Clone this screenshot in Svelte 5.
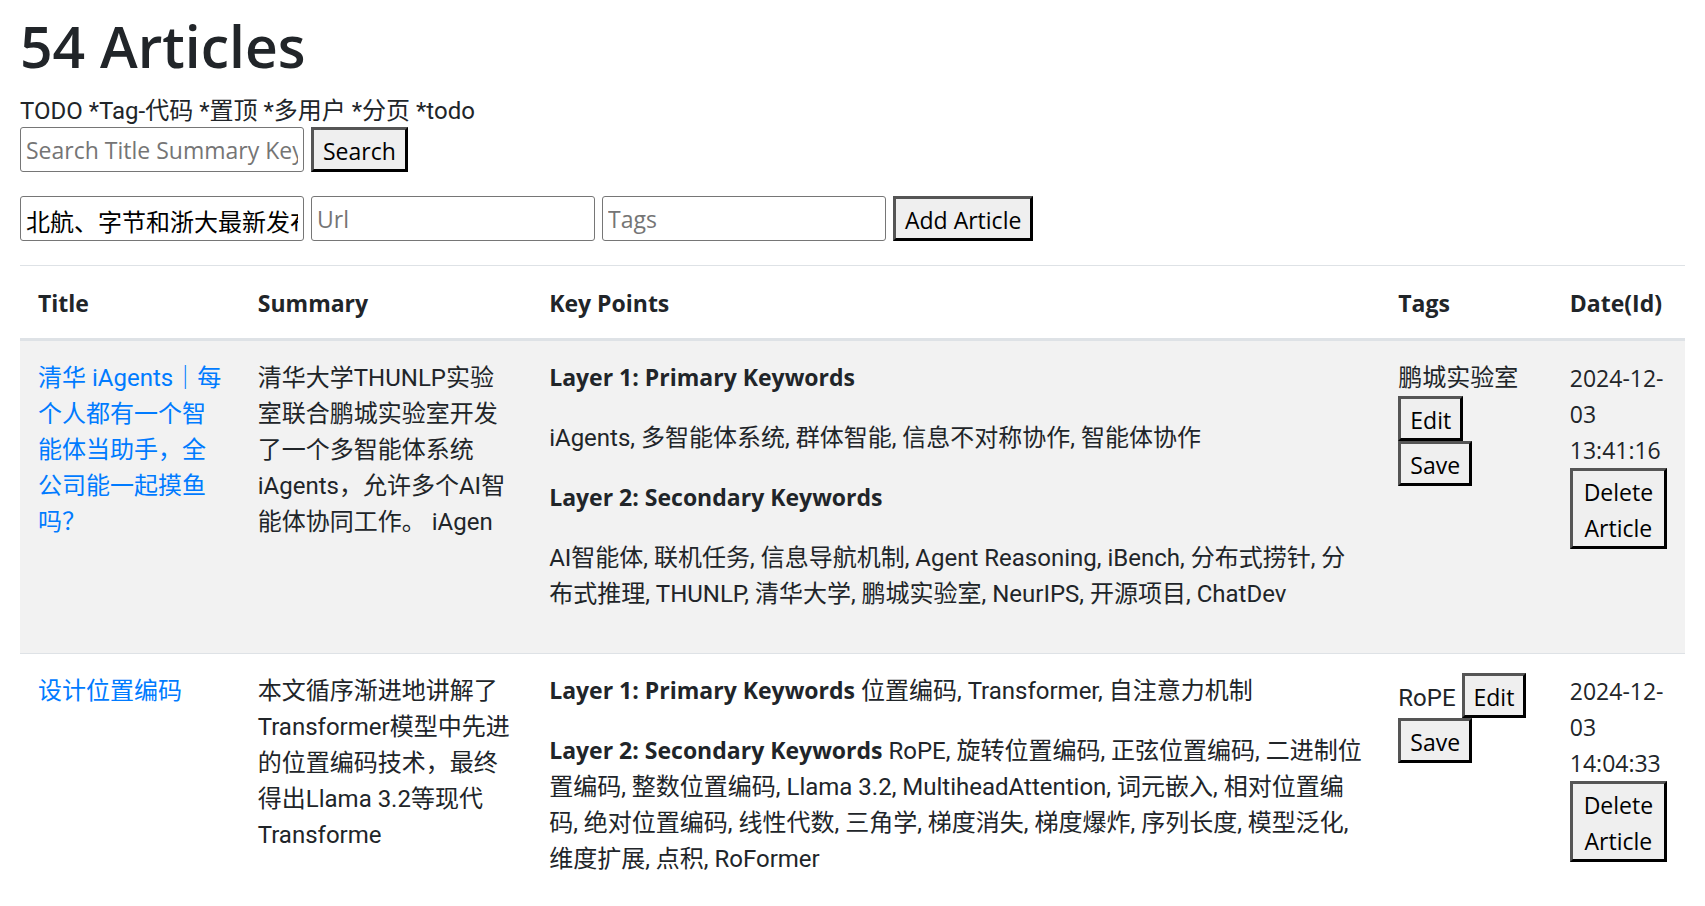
<script>
  let query = $state('');
  let title = $state('北航、字节和浙大最新发布');
  let url = $state('');
  let tags = $state('');

  const articles = [
    {
      title: '清华 iAgents｜每个人都有一个智能体当助手，全公司能一起摸鱼吗？',
      summary: '清华大学THUNLP实验室联合鹏城实验室开发了一个多智能体系统iAgents，允许多个AI智能体协同工作。 iAgen',
      points: [
        { strong: 'Layer 1: Primary Keywords' },
        { text: 'iAgents, 多智能体系统, 群体智能, 信息不对称协作, 智能体协作' },
        { strong: 'Layer 2: Secondary Keywords' },
        { text: 'AI智能体, 联机任务, 信息导航机制, Agent Reasoning, iBench, 分布式捞针, 分布式推理, THUNLP, 清华大学, 鹏城实验室, NeurIPS, 开源项目, ChatDev' }
      ],
      tags: '鹏城实验室',
      date: '2024-12-03 13:41:16'
    },
    {
      title: '设计位置编码',
      summary: '本文循序渐进地讲解了Transformer模型中先进的位置编码技术，最终得出Llama 3.2等现代Transforme',
      points: [
        { strong: 'Layer 1: Primary Keywords', text: '位置编码, Transformer, 自注意力机制' },
        { strong: 'Layer 2: Secondary Keywords', text: 'RoPE, 旋转位置编码, 正弦位置编码, 二进制位置编码, 整数位置编码, Llama 3.2, MultiheadAttention, 词元嵌入, 相对位置编码, 绝对位置编码, 线性代数, 三角学, 梯度消失, 梯度爆炸, 序列长度, 模型泛化, 维度扩展, 点积, RoFormer' }
      ],
      tags: 'RoPE',
      date: '2024-12-03 14:04:33'
    }
  ];
</script>

<main>
  <h1>54 Articles</h1>
  <div class="note">TODO *Tag-代码 *置顶 *多用户 *分页 *todo</div>

  <form onsubmit={(e) => e.preventDefault()}>
    <input type="text" aria-label="Search" placeholder="Search Title Summary Keypoints" bind:value={query} />
    <button type="submit">Search</button>
  </form>

  <form onsubmit={(e) => e.preventDefault()}>
    <input type="text" aria-label="Title" placeholder="Title" bind:value={title} />
    <input type="text" aria-label="Url" placeholder="Url" bind:value={url} />
    <input type="text" aria-label="Tags" placeholder="Tags" bind:value={tags} />
    <button type="submit">Add Article</button>
  </form>

  <table>
    <thead>
      <tr>
        <th class="title">Title</th>
        <th class="summary">Summary</th>
        <th class="points">Key Points</th>
        <th class="tags">Tags</th>
        <th class="date">Date(Id)</th>
      </tr>
    </thead>
    <tbody>
      {#each articles as article}
        <tr>
          <td><a href="#article">{article.title}</a></td>
          <td>{article.summary}</td>
          <td>
            {#each article.points as point}
              <p>{#if point.strong}<strong>{point.strong}</strong>{/if} {point.text ?? ''}</p>
            {/each}
          </td>
          <td>
            <span>{article.tags}</span>
            <button type="button">Edit</button>
            <button type="button">Save</button>
          </td>
          <td class="stamp">
            {article.date}
            <button type="button">Delete Article</button>
          </td>
        </tr>
      {/each}
    </tbody>
  </table>
</main>

<style>
  :global(body) {
    margin: 0;
    background: #fff;
  }

  main {
    padding: 10px 20px 0;
    color: #212529;
    font-family: Roboto, 'Noto Sans CJK SC', sans-serif;
    font-size: 24px;
    line-height: 36px;
  }

  h1 {
    margin: 0 0 13px;
    font-family: 'Open Sans', sans-serif;
    font-size: 57px;
    font-weight: 600;
    line-height: 72px;
  }

  .note {
    line-height: 32px;
  }

  form {
    display: flex;
    flex-wrap: wrap;
    gap: 7px;
    margin-bottom: 24px;
  }

  input,
  button {
    box-sizing: border-box;
    margin: 0;
    font: inherit;
    color: #000;
  }

  input {
    width: 284px;
    height: 45px;
    padding: 3px 5px 0;
    border: 1px solid #767676;
    border-radius: 3px;
    background: #fff;
  }

  input::placeholder {
    color: #757575;
    font-family: 'Open Sans', sans-serif;
    font-size: 23px;
    opacity: 1;
  }

  button,
  th,
  strong,
  .stamp {
    font-family: 'Open Sans', sans-serif;
    font-size: 23px;
  }

  button {
    padding: 3px 9px 0;
    border: 3px solid;
    border-color: #555 #000 #000 #555;
    border-radius: 0;
    background: #efefef;
  }

  table {
    width: 100%;
    table-layout: fixed;
    border-collapse: collapse;
  }

  th,
  td {
    box-sizing: border-box;
    padding: 19px 18px 17px;
    border-top: 1px solid #dee2e6;
    text-align: left;
    vertical-align: top;
  }

  th {
    border-bottom: 3px solid #dee2e6;
    font-weight: 700;
  }

  .title {
    width: 13.2%;
  }

  .summary {
    width: 17.5%;
  }

  .points {
    width: 51%;
  }

  .tags {
    width: 10.3%;
  }

  .date {
    width: 8%;
  }

  tbody tr:nth-child(odd) {
    background: #f2f2f2;
  }

  p {
    margin: 0 0 24px;
  }

  strong {
    font-weight: 700;
    line-height: 24px;
  }

  a {
    color: #007bff;
    text-decoration: none;
  }
</style>
